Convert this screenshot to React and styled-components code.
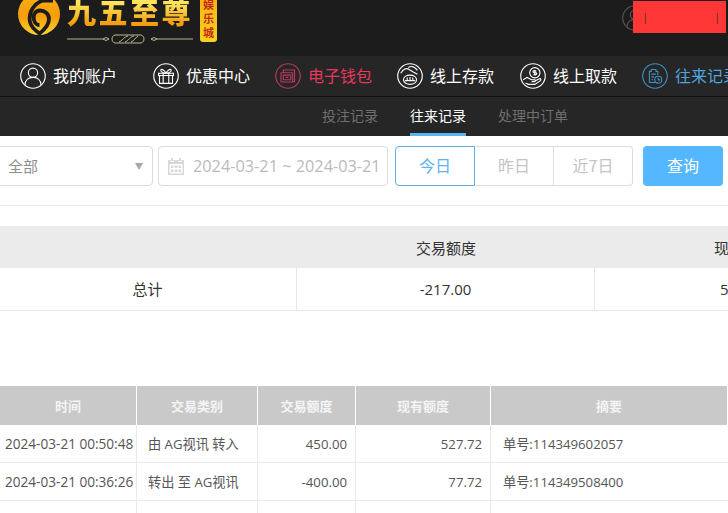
import React from "react"
import styled, { createGlobalStyle } from "styled-components"

const GlobalStyle = createGlobalStyle`
  html, body {
    margin: 0;
    padding: 0;
    background: #fff;
    overflow: hidden;
  }
  body {
    width: 728px;
    height: 513px;
    font-family: "Noto Sans CJK SC", "Open Sans", sans-serif;
  }
`

const Page = styled.div`
  width: 728px;
  height: 513px;
  overflow: hidden;
`

const TopBar = styled.div`
  height: 56px;
  background: #1c1c1c;
  position: relative;
  overflow: hidden;
`

const Logo = styled.div`
  display: flex;
  align-items: flex-start;
  padding-left: 18px;
  margin-top: -8px;
`

const LogoWords = styled.div`
  margin-left: 6px;
  width: 126px;
`

const LogoTitle = styled.div`
  font-family: "Noto Sans CJK SC", serif;
  font-weight: 900;
  font-size: 29px;
  line-height: 38px;
  letter-spacing: 2.5px;
  white-space: nowrap;
  background: linear-gradient(#ffe35c 30%, #f39c0b 85%);
  -webkit-background-clip: text;
  background-clip: text;
  color: transparent;
`

const FlourishWrap = styled.div`
  margin-top: 4px;
`

const LogoBadge = styled.div`
  width: 17px;
  height: 50px;
  margin-left: 7px;
  border-radius: 3px;
  background: linear-gradient(#f6b312, #f7d21f);
  color: #c8291a;
  font-size: 11px;
  font-weight: 700;
  line-height: 14px;
  text-align: center;
  display: flex;
  flex-direction: column;
  justify-content: flex-end;
  padding-bottom: 3px;
  box-sizing: border-box;
`

const UserArea = styled.div`
  position: absolute;
  top: 5px;
  left: 622px;
  display: flex;
  align-items: center;
`

const Redact = styled.div`
  position: absolute;
  left: 11px;
  top: -4px;
  width: 93px;
  height: 32px;
  background: #ff3636;
`

const RedactTick = styled.span`
  position: absolute;
  top: 12px;
  left: ${(p) => p.$x}px;
  width: 1px;
  height: 11px;
  background: #7a3a2a;
`

const NavBar = styled.div`
  height: 40px;
  background: #262626;
  border-bottom: 1px solid #101010;
  display: flex;
  padding-left: 20px;
  white-space: nowrap;
  overflow: hidden;
`

const NavItem = styled.div`
  display: flex;
  align-items: center;
  gap: 7px;
  margin-right: ${(p) => p.$gap}px;
  font-size: 16px;
  color: ${(p) => p.$color || "#fff"};
  flex: none;
`

const NavLabel = styled.span`
  padding-bottom: 2px;
`

const SubNav = styled.div`
  height: 39px;
  background: #262626;
  display: flex;
  padding-left: 322px;
  gap: 32px;
  font-size: 14px;
`

const SubTab = styled.div`
  height: 39px;
  line-height: 36px;
  box-sizing: border-box;
  color: ${(p) => (p.$active ? "#fff" : "#6f6f6f")};
  border-bottom: 3px solid ${(p) => (p.$active ? "#55b6f6" : "transparent")};
`

const FilterRow = styled.div`
  height: 70px;
  border-bottom: 1px solid #e8e8e8;
  display: flex;
  align-items: flex-start;
  padding-top: 10px;
  box-sizing: border-box;
  margin-left: -10px;
`

const SelectBox = styled.div`
  width: 163px;
  height: 40px;
  box-sizing: border-box;
  border: 1px solid #dcdcdc;
  border-radius: 4px;
  display: flex;
  align-items: center;
  justify-content: space-between;
  padding: 0 9px 2px 17px;
  font-size: 15px;
  color: #8e8e8e;
`

const Caret = styled.span`
  width: 0;
  height: 0;
  margin-top: 2px;
  border-left: 4px solid transparent;
  border-right: 4px solid transparent;
  border-top: 7px solid #a8a8a8;
`

const DateBox = styled.div`
  width: 230px;
  height: 40px;
  margin-left: 5px;
  box-sizing: border-box;
  border: 1px solid #dcdcdc;
  border-radius: 4px;
  display: flex;
  align-items: center;
  padding-left: 9px;
  gap: 9px;
  font-size: 16.3px;
  color: #bbb;
  white-space: nowrap;
  font-family: "Open Sans", sans-serif;
`

const RangeGroup = styled.div`
  display: flex;
  margin-left: 7px;
  height: 40px;
`

const RangeBtn = styled.div`
  width: ${(p) => p.$w}px;
  box-sizing: border-box;
  border: 1px solid ${(p) => (p.$active ? "#5cb0e8" : "#dcdcdc")};
  border-left-width: ${(p) => (p.$active ? 1 : 0)}px;
  border-radius: ${(p) => p.$radius};
  color: ${(p) => (p.$active ? "#5db4ee" : "#c4c4c4")};
  font-size: 16px;
  line-height: 37px;
  text-align: center;
`

const QueryBtn = styled.div`
  width: 80px;
  height: 40px;
  margin-left: 10px;
  border-radius: 4px;
  background: #55b7ff;
  color: #fff;
  font-size: 16px;
  line-height: 38px;
  text-align: center;
`

const Summary = styled.div`
  margin-top: 20px;
  height: 85px;
  width: 900px;
  margin-left: -1px;
`

const SummaryHead = styled.div`
  height: 42px;
  background: #ebebeb;
  display: grid;
  grid-template-columns: 298px 298px 298px;
  font-size: 15px;
  color: #333;
  line-height: 44px;
  text-align: center;
`

const SummaryRow = styled.div`
  height: 43px;
  box-sizing: border-box;
  border-bottom: 1px solid #e8e8e8;
  display: grid;
  grid-template-columns: 298px 298px 298px;
  font-size: 15px;
  color: #333;
  line-height: 43px;
  text-align: center;
`

const SummaryCell = styled.div`
  border-right: 1px solid #e8e8e8;
  font-family: "Open Sans", "Noto Sans CJK SC", sans-serif;
`

const Ledger = styled.div`
  margin-top: 75px;
`

const LedgerGrid = styled.div`
  display: grid;
  grid-template-columns: 137px 121px 98px 135px 237px;
`

const HeadCell = styled.div`
  height: 39px;
  background: #c9c9c9;
  border-right: 1px solid #fff;
  box-sizing: border-box;
  color: #f4f4f4;
  font-size: 13px;
  font-weight: 700;
  line-height: 39px;
  text-align: center;
  &:last-child {
    border-right: 0;
  }
`

const Cell = styled.div`
  height: 38px;
  box-sizing: border-box;
  border-right: 1px solid #eaeaea;
  border-bottom: 1px solid #eaeaea;
  font-family: "Open Sans", "Noto Sans CJK SC", sans-serif;
  font-size: ${(p) => p.$size}px;
  line-height: 38px;
  color: #555;
  white-space: nowrap;
  overflow: hidden;
  text-align: ${(p) => p.$align || "left"};
  padding: ${(p) => p.$pad || "0"};
  &:nth-child(5n) {
    border-right: 0;
  }
`

const strokeProps = { fill: "none", stroke: "currentColor", strokeWidth: 1.2 }

function Ring({ color, children }) {
  return (
    <svg width="26" height="26" viewBox="0 0 28 28" style={{ color }} {...strokeProps}>
      <circle cx="14" cy="14" r="13.2" />
      {children}
    </svg>
  )
}

const UserIcon = ({ color }) => (
  <Ring color={color}>
    <circle cx="14" cy="10.5" r="5" />
    <path d="M5.5 23.5c0-5 3.5-8 8.5-8s8.5 3 8.5 8" />
  </Ring>
)

const GiftIcon = ({ color }) => (
  <Ring color={color}>
    <path d="M6 11h16v2.5H6zM7 13.5V22h14v-8.5M11 11v11M17 11v11" />
    <path d="M14 11c-2-4-5-5-5.5-3.500S10.500 11 14 11c2-4 5-5 5.500-3.500S17.500 11 14 11z" />
  </Ring>
)

const WalletIcon = ({ color }) => (
  <Ring color={color}>
    <path d="M9 10V7.5h12V20h-2M6.5 10.5h12.500V20.500H6.500z" />
    <path d="M9 13h8v5H9zM11.500 15.500h3" />
  </Ring>
)

const DepositIcon = ({ color }) => (
  <Ring color={color}>
    <path d="M4 11c3-5 6-6 9-4l5 3 4 2M12 5c3-2 7-1 10 3" />
    <path d="M7 18c0-3 3-5 7-5s7 2 7 5-3 5-7 5-7-2-7-5z" />
    <path d="M8.500 19h11M11 15.500v3.500M14 15v4M17 15.500v3.500" />
  </Ring>
)

const WithdrawIcon = ({ color }) => (
  <Ring color={color}>
    <circle cx="16" cy="10.500" r="5.500" />
    <path d="M16 7.500v6M17.500 8.500h-2.500a1 1 0 0 0 0 2h2a1 1 0 0 1 0 2h-2.500" />
    <path d="M3.500 18l4-2.500 5 2.500h3c1.500 0 1.500 2 0 2h-3M16 19.500l5-2.500c1.500-.5 2 1 1 2l-6 4H9l-3-1.500" />
  </Ring>
)

const RecordIcon = ({ color }) => (
  <Ring color={color}>
    <path d="M17 21H8V9h2V7h5v2h2v4" />
    <path d="M10 12h5M10 15h3M10 18h2" />
    <circle cx="17.500" cy="18" r="3.800" />
    <path d="M17.500 16v2.200h2" />
  </Ring>
)

const CalendarIcon = () => (
  <svg width="16" height="18" viewBox="0 0 16 18" fill="#d8d8d8">
    <path d="M3 1h2v3H3zM11 1h2v3h-2zM0 3h2.500v2h3V3h5v2h3V3H16v15H0zM1.500 7v9.500h13V7z" />
    <path d="M3 8.500h2.500V11H3zM6.800 8.500h2.500V11H6.800zM10.500 8.500H13V11h-2.500zM3 12.500h2.500V15H3zM6.800 12.500h2.500V15H6.800zM10.500 12.500H13V15h-2.500z" />
  </svg>
)

const LogoMark = () => (
  <svg width="43" height="44" viewBox="0 0 43 44" style={{ flex: "none" }}>
    <defs>
      <linearGradient id="gold" x1="0" y1="0" x2="0" y2="1">
        <stop offset="0" stopColor="#f9b216" />
        <stop offset="0.55" stopColor="#f59c0c" />
        <stop offset="1" stopColor="#ffd52e" />
      </linearGradient>
    </defs>
    <circle cx="21" cy="22" r="21" fill="url(#gold)" />
    <path
      d="M35 8.500H26C17 10 10 20 12 30c1 5 6 9 9.500 11.500C26 38 31 33 31 27c0-5-4-8.500-9-8.500S15 23 16 28c.6 3 3 5 5.500 5"
      fill="none"
      stroke="#1c1c1c"
      strokeWidth="3.800"
    />
  </svg>
)

const Flourish = () => (
  <svg width="126" height="10" viewBox="0 0 126 10" fill="none" stroke="#e8dcae" strokeWidth="0.8" style={{ display: "block" }}>
    <path d="M0 5h36M90 5h36" />
    <path d="M36 5l3-1.500 3 1.500-3 1.500zM84 5l3-1.500 3 1.500-3 1.500z" />
    <path d="M48 1c-4 1-4 7 0 8h26c4-1 4-7 0-8z" />
    <path d="M52 8c3-1 6-6 9-6M58 8c3-1 6-6 9-6M64 8c3-1 5-5 7-6" />
  </svg>
)

const navItems = [
  { label: "我的账户", Icon: UserIcon, gap: 36 },
  { label: "优惠中心", Icon: GiftIcon, gap: 25 },
  { label: "电子钱包", Icon: WalletIcon, color: "#e8375d", iconColor: "#b8395c", gap: 25 },
  { label: "线上存款", Icon: DepositIcon, gap: 26 },
  { label: "线上取款", Icon: WithdrawIcon, gap: 25 },
  { label: "往来记录", Icon: RecordIcon, color: "#4fa3df", iconColor: "#3f8dc4", gap: 0 },
]

const ledgerRows = [
  ["2024-03-21 00:50:48", "由 AG视讯 转入", "450.00", "527.72", "单号:114349602057"],
  ["2024-03-21 00:36:26", "转出 至 AG视讯", "-400.00", "77.72", "单号:114349508400"],
  ["", "", "", "", ""],
]

export default function App() {
  return (
    <Page>
      <GlobalStyle />
      <TopBar>
        <Logo>
          <LogoMark />
          <LogoWords>
            <LogoTitle>九五至尊</LogoTitle>
            <FlourishWrap>
              <Flourish />
            </FlourishWrap>
          </LogoWords>
          <LogoBadge>
            <span>娱</span>
            <span>乐</span>
            <span>城</span>
          </LogoBadge>
        </Logo>
        <UserArea>
          <UserIcon color="#555" />
          <Redact>
            <RedactTick $x={12} />
            <RedactTick $x={84} />
          </Redact>
        </UserArea>
      </TopBar>
      <NavBar>
        {navItems.map(({ label, Icon, color, iconColor, gap }) => (
          <NavItem key={label} $color={color} $gap={gap}>
            <Icon color={iconColor || "#fff"} />
            <NavLabel>{label}</NavLabel>
          </NavItem>
        ))}
      </NavBar>
      <SubNav>
        <SubTab>投注记录</SubTab>
        <SubTab $active>往来记录</SubTab>
        <SubTab>处理中订单</SubTab>
      </SubNav>
      <FilterRow>
        <SelectBox>
          全部
          <Caret />
        </SelectBox>
        <DateBox>
          <CalendarIcon />
          2024-03-21 ~ 2024-03-21
        </DateBox>
        <RangeGroup>
          <RangeBtn $active $w={80} $radius="4px 0 0 4px">今日</RangeBtn>
          <RangeBtn $w={79} $radius="0">昨日</RangeBtn>
          <RangeBtn $w={79} $radius="0 4px 4px 0">近7日</RangeBtn>
        </RangeGroup>
        <QueryBtn>查询</QueryBtn>
      </FilterRow>
      <Summary>
        <SummaryHead>
          <div />
          <div>交易额度</div>
          <div>现有额度</div>
        </SummaryHead>
        <SummaryRow>
          <SummaryCell>总计</SummaryCell>
          <SummaryCell>-217.00</SummaryCell>
          <SummaryCell>527.72</SummaryCell>
        </SummaryRow>
      </Summary>
      <Ledger>
        <LedgerGrid>
          <HeadCell>时间</HeadCell>
          <HeadCell>交易类别</HeadCell>
          <HeadCell>交易额度</HeadCell>
          <HeadCell>现有额度</HeadCell>
          <HeadCell>摘要</HeadCell>
          {ledgerRows.map((row, i) =>
            row.map((value, j) => (
              <Cell
                key={`${i}-${j}`}
                $size={j === 0 ? 13.6 : 13.2}
                $align={j === 2 || j === 3 ? "right" : "left"}
                $pad={j === 0 ? "0 0 0 5px" : j === 1 ? "0 0 0 11px" : j === 4 ? "0 0 0 12px" : "0 8px 0 0"}
              >
                {value}
              </Cell>
            ))
          )}
        </LedgerGrid>
      </Ledger>
    </Page>
  )
}
